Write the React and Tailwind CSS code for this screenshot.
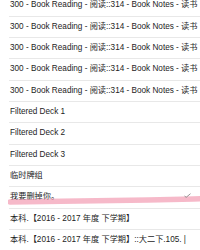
import React from "react";

const rows = [
  "300 - Book Reading - 阅读::314 - Book Notes - 读书",
  "300 - Book Reading - 阅读::314 - Book Notes - 读书",
  "300 - Book Reading - 阅读::314 - Book Notes - 读书",
  "300 - Book Reading - 阅读::314 - Book Notes - 读书",
  "300 - Book Reading - 阅读::314 - Book Notes - 读书",
  "Filtered Deck 1",
  "Filtered Deck 2",
  "Filtered Deck 3",
  "临时牌组",
  "SPECIAL",
  "本科.【2016 - 2017 年度 下学期】",
  "本科.【2016 - 2017 年度 下学期】::大二下.105. |",
];

export default function App() {
  return (
    <div className="w-[200px] h-[250px] overflow-hidden bg-white text-[#1d1d1d] font-['Liberation_Sans','Noto_Sans_CJK_SC',sans-serif]">
      <div className="-mt-[4.67px] flex flex-col">
        {rows.map((r, i) =>
          r === "SPECIAL" ? (
            <div key={i} className="relative h-[21.33px] ml-[9px] border-b border-[#e8e8e8] flex items-center justify-between pl-px pr-[9px]">
              <span className="text-[8.2px] whitespace-nowrap">我要删掉你。</span>
              <svg className="absolute -left-[1px] top-0 pointer-events-none" width="192" height="22" viewBox="0 0 192 22">
                <path d="M2 15 C 40 14.8, 90 14, 140 13 S 180 12, 192 11.8" fill="none" stroke="#f29bb2" strokeOpacity="0.7" strokeWidth="5.5" strokeLinecap="round" />
              </svg>
              <svg width="7" height="5" viewBox="0 0 7 5" className="relative mb-[3px]">
                <path d="M0.5 3 L2.2 4.3 L6.5 0.7" fill="none" stroke="#8a8a8a" strokeWidth="0.9" />
              </svg>
            </div>
          ) : (
            <div key={i} className="h-[21.33px] ml-[9px] border-b border-[#e8e8e8] flex items-center pl-px overflow-hidden">
              <span className="text-[8.2px] whitespace-nowrap">{r}</span>
            </div>
          )
        )}
      </div>
    </div>
  );
}
